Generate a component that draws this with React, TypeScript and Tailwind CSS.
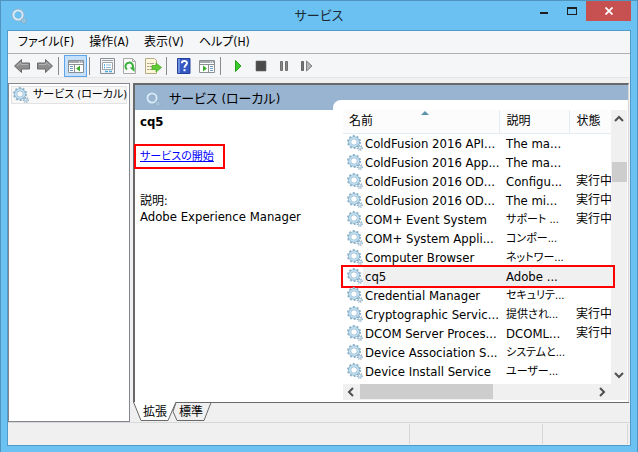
import type { ReactNode } from "react";

type Service = { name: string; desc: string; kana?: boolean; status?: string; selected?: boolean };

const services: Service[] = [
  { name: "ColdFusion 2016 API...", desc: "The ma..." },
  { name: "ColdFusion 2016 App...", desc: "The ma..." },
  { name: "ColdFusion 2016 OD...", desc: "Configu...", status: "実行中" },
  { name: "ColdFusion 2016 OD...", desc: "The mi...", status: "実行中" },
  { name: "COM+ Event System", desc: "サポート ...", kana: true, status: "実行中" },
  { name: "COM+ System Appli...", desc: "コンポー...", kana: true },
  { name: "Computer Browser", desc: "ネットワー...", kana: true },
  { name: "cq5", desc: "Adobe ...", selected: true },
  { name: "Credential Manager", desc: "セキュリテ...", kana: true },
  { name: "Cryptographic Servic...", desc: "提供され...", kana: true, status: "実行中" },
  { name: "DCOM Server Proces...", desc: "DCOML...", status: "実行中" },
  { name: "Device Association S...", desc: "システムと...", kana: true },
  { name: "Device Install Service", desc: "ユーザー...", kana: true },
];

const menus = ["ファイル(F)", "操作(A)", "表示(V)", "ヘルプ(H)"];

function Gears({ pale = false }: { pale?: boolean }) {
  return (
    <svg viewBox="0 0 16 16" className="size-4 shrink-0" fill="none" aria-hidden="true">
      {!pale && <circle cx="7" cy="7" r="6" stroke="#8fb3c9" strokeWidth="2" strokeDasharray="1.9 1.87" />}
      <circle cx="7" cy="7" r={pale ? 5 : 4.3} stroke={pale ? "#8fb4d0" : "#86aec8"} strokeWidth="3" />
      <circle cx="7" cy="7" r={pale ? 4.6 : 4.2} stroke={pale ? "#dcecf7" : "#c3e0f1"} strokeWidth="1.8" />
      <circle cx="12.8" cy="12.8" r="2.4" stroke="#8aa9bf" strokeWidth="1.4" strokeDasharray="1 .9" />
      <circle cx="12.8" cy="12.8" r="1.4" stroke="#a9c6da" strokeWidth="1.2" />
    </svg>
  );
}

function Tool({ label, active, children }: { label: string; active?: boolean; children: ReactNode }) {
  return (
    <button
      aria-label={label}
      className={
        active
          ? "flex h-[22px] w-[23px] items-center justify-center border border-[#5fa3e8] bg-[#c4e0fb]"
          : "flex h-[22px] w-[23px] items-center justify-center"
      }
    >
      <svg viewBox="0 0 18 18" className="size-[18px] shrink-0" fill="none" aria-hidden="true">
        {children}
      </svg>
    </button>
  );
}

function Divider() {
  return (
    <span className="flex h-[18px] w-2 pl-[2px]">
      <span className="w-px bg-[#8a8a8a]" />
    </span>
  );
}

function Chevron({ d }: { d: string }) {
  return (
    <svg viewBox="0 0 10 10" className="size-[10px]" fill="none" stroke="#505050" strokeWidth="2" aria-hidden="true">
      <path d={d} />
    </svg>
  );
}

function Toolbar() {
  return (
    <div className="flex h-6 items-center border-b border-[#e6e6e6] bg-[#f5f6f7] pt-px pl-[2px]">
      <Tool label="戻る">
        <path d="M1.5 9 8.5 2.5V6H16.5V12H8.5V15.5Z" fill="#8d8d8d" stroke="#6a6a6a" />
        <path d="M4 9 8 5.5V7.5H15" stroke="#b5b5b5" />
      </Tool>
      <Tool label="進む">
        <path d="M16.5 9 9.5 2.5V6H1.5V12H9.5V15.5Z" fill="#8d8d8d" stroke="#6a6a6a" />
        <path d="M14 9 10 5.5V7.5H3" stroke="#b5b5b5" />
      </Tool>
      <Divider />
      <Tool label="コンソール ツリーの表示" active>
        <path d="M1.5 3.5h15v12h-15z" fill="#fff" stroke="#8b8f94" />
        <path d="M2 4h14v2H2z" fill="#a3a8ad" />
        <path d="M12 5h1M14 5h1" stroke="#fff" />
        <path d="M2 7.5h14" stroke="#8b8f94" />
        <path d="M7.5 8v7" stroke="#8b8f94" />
        <path d="M3 9.5h3M3 11.5h3M3 13.5h3" stroke="#6f9ac0" />
        <path d="M13 8.5v6L9 11.5z" fill="#3faa2f" />
      </Tool>
      <Divider />
      <Tool label="プロパティ">
        <path d="M2.5 1.5h14v15h-14z" fill="#f4f5f6" stroke="#8b8f94" />
        <path d="M4.5 5.5h10v7h-10z" fill="#fff" stroke="#a0a4a8" />
        <path d="M4 3.5h11" stroke="#9aa0a6" />
        <path d="M6 8h1M6 10.5h1" stroke="#2c9ad1" strokeWidth="1.4" />
        <path d="M8 8h5M8 10.5h5" stroke="#8fb9d6" />
        <path d="M7 14.5h3M11 14.5h3" stroke="#4aa8dc" strokeWidth="1.4" />
      </Tool>
      <Tool label="最新の情報に更新">
        <path d="M2.5 1.5h9l3 3v12h-12z" fill="#fafafa" stroke="#a8a8a8" />
        <path d="M11.5 1.5v3h3" stroke="#a8a8a8" />
        <path d="M6 12.5A3.8 3.8 0 1 1 11 12" stroke="#39b03a" strokeWidth="2" />
        <path d="M8.5 10.5h5v4.5z" fill="#39b03a" />
      </Tool>
      <Tool label="一覧のエクスポート">
        <path d="M1.5 1.5h9l2 2v13h-11z" fill="#fdf6d8" stroke="#b5aa86" />
        <path d="M3.5 6.5h1M3.5 9.5h1M3.5 12.5h1" stroke="#555" />
        <path d="M5.5 6.5h4.5M5.5 9.5h3M5.5 12.5h3" stroke="#a8a08a" />
        <path d="M8 8.5h4V6l5.5 4.5-5.5 4.5v-2.5H8z" fill="#5fcb35" stroke="#3fa51f" strokeWidth=".7" />
      </Tool>
      <Divider />
      <Tool label="ヘルプ">
        <path d="M2.5 1.5h12.5v15H2.5z" fill="#3459c4" stroke="#24409a" />
        <path d="M3 2h2v14H3z" fill="#6f8fe0" />
        <path d="M6.8 6.300c0-3 5.200-3 5.200-.2 0 2-2.500 2-2.500 4.700" stroke="#fff" strokeWidth="1.9" />
        <path d="M8.5 12.2h2v2h-2z" fill="#fff" />
      </Tool>
      <Tool label="操作ウィンドウの表示">
        <path d="M1.5 3.5h15v12h-15z" fill="#fff" stroke="#8b8f94" />
        <path d="M2 4h14v2H2z" fill="#a3a8ad" />
        <path d="M12 5h1M14 5h1" stroke="#fff" />
        <path d="M2 7.5h14M10.5 8v7" stroke="#8b8f94" />
        <path d="M12 9.5h3M12 11.5h3M12 13.5h3" stroke="#6f9ac0" />
        <path d="M5 8.5v6l4-3z" fill="#3faa2f" />
      </Tool>
      <Divider />
      <Tool label="サービスの開始">
        <path d="M6.500 3.500v11l5.500-5.500z" fill="#3ccb2d" stroke="#27a01c" />
      </Tool>
      <Tool label="サービスの停止">
        <path d="M4 4h10v10H4z" fill="#4a4a4a" stroke="#6a6a6a" strokeWidth=".6" />
      </Tool>
      <Tool label="サービスの一時停止">
        <path d="M5.5 4.5h2v9h-2zM10.5 4.5h2v9h-2z" fill="#8a8a8a" stroke="#707070" />
      </Tool>
      <Tool label="サービスの再起動">
        <path d="M3.5 4.5h2v9h-2z" fill="#777" stroke="#666" />
        <path d="M8.5 4v10l5.500-5z" fill="#b5b5b5" stroke="#808080" />
      </Tool>
    </div>
  );
}

function ServiceTable() {
  return (
    <table className="w-full table-fixed border-collapse">
      <colgroup>
        <col />
        <col className="w-[70px]" />
        <col className="w-[42px]" />
      </colgroup>
      <thead>
        <tr className="h-[23px] bg-[#fcfcfc] text-left text-xs">
          <th className="relative border-r border-b border-[#e1ecf5] p-0 pl-[6px] font-normal">
            名前
            <svg viewBox="0 0 8 4" className="absolute top-px left-1/2 h-1 w-2" aria-hidden="true">
              <path d="M4 0 8 4H0z" fill="#5b93ad" />
            </svg>
          </th>
          <th className="border-r border-b border-[#e1ecf5] p-0 pl-[7px] font-normal">説明</th>
          <th className="border-b border-[#e1ecf5] p-0 pl-[7px] font-normal">状態</th>
        </tr>
      </thead>
      <tbody>
        {services.map((s, i) => (
          <tr key={i} className="relative h-[19px] leading-[19px] whitespace-nowrap">
            <td className="p-0 pl-1">
              <div className="flex h-[19px] items-center">
                <Gears />
                <span className={s.selected ? "grow bg-[#f0f0f0] pl-[2px]" : "pl-[2px]"}>{s.name}</span>
              </div>
              {s.selected && (
                <span className="pointer-events-none absolute -inset-y-[2px] -right-1 -left-[2px] border-2 border-[#f00]" />
              )}
            </td>
            <td className={s.selected ? "bg-[#f0f0f0] p-0" : "p-0"}>
              <div className={s.kana ? "h-[19px] pl-[7px] text-[11px]" : "h-[19px] pl-[7px]"}>{s.desc}</div>
            </td>
            <td className={s.selected ? "bg-[#f0f0f0] p-0" : "p-0"}>
              <div className="h-[19px] overflow-hidden pl-[7px] text-xs leading-[19px]">{s.status}</div>
            </td>
          </tr>
        ))}
      </tbody>
    </table>
  );
}

export default function App() {
  return (
    <div className="flex min-h-screen flex-col border border-[#4f95bd] bg-[#6bc1f2] px-[6px] pb-[6px] font-['DejaVu_Sans_Condensed','Noto_Sans_CJK_JP',sans-serif] text-[13px] text-black [font-feature-settings:'palt']">
      <header className="grid h-[29px] grid-cols-[1fr_auto_1fr] items-center">
        <div className="pl-1">
          <Gears pale />
        </div>
        <h1 className="text-[13px] text-[#1c2a33]">サービス</h1>
        <div className="flex h-full items-start justify-end">
          <button aria-label="最小化" className="flex h-5 w-[26px] items-center justify-center">
            <span className="mt-1 h-[2px] w-2 bg-[#1e1e1e]" />
          </button>
          <button aria-label="最大化" className="flex h-5 w-[29px] items-center justify-center">
            <span className="h-2 w-[10px] border border-t-2 border-[#1e1e1e]" />
          </button>
          <button aria-label="閉じる" className="flex h-5 w-[45px] items-center justify-center bg-[#c75050]">
            <svg viewBox="0 0 8 8" className="size-2" stroke="#fff" strokeWidth="1.8" aria-hidden="true">
              <path d="M.5.5l7 7M7.5.5l-7 7" />
            </svg>
          </button>
        </div>
      </header>

      <div className="flex grow flex-col border border-[#4f9cc9] bg-[#f0f0f0]">
        <nav className="flex h-[23px] items-center gap-[15px] border-b border-[#b0b0b0] bg-[#f5f6f7] pl-[10px] text-xs">
          {menus.map((m) => (
            <button key={m}>{m}</button>
          ))}
        </nav>
        <Toolbar />

        <main className="mt-[5px] flex grow">
          <aside className="w-[122px] shrink-0 border border-[#828790] bg-white p-[2px]">
            <button className="flex h-[18px] w-full items-center gap-1 border border-[#e2e2e2] bg-[#f7f7f7] pl-[1px] text-[11px] whitespace-nowrap">
              <Gears />
              サービス (ローカル)
            </button>
          </aside>

          <section className="mr-px ml-[3px] flex min-w-0 grow flex-col">
            <div className="flex grow border-t-2 border-r border-l-2 border-t-[#696969] border-r-[#d8d8d8] border-l-[#696969] bg-white">
              <div className="w-[198px] shrink-0">
                <h2 className="flex h-[25px] items-center gap-2 bg-[#99b4d1] pt-[3px] pl-[10px]">
                  <Gears pale />
                  サービス (ローカル)
                </h2>
                <div className="pl-[5px]">
                  <h3 className="mt-1 leading-4 font-bold">cq5</h3>
                  <div className="mt-[14px] -ml-[6px] flex h-[25px] w-[91px] items-center border-2 border-[#f00] pl-1">
                    <a href="#start" className="text-[11px] leading-4 text-[#00f] underline">
                      サービスの開始
                    </a>
                  </div>
                  <p className="mt-6 text-xs leading-4">説明:</p>
                  <p className="leading-4">Adobe Experience Manager</p>
                </div>
              </div>

              <div className="flex min-w-0 grow flex-col bg-[#99b4d1] pt-[15px]">
                <div className="flex grow flex-col rounded-tl-lg bg-white pt-[10px] pr-px pb-[2px] pl-[10px]">
                  <div className="flex grow">
                    <div className="min-w-0 grow pb-[3px]">
                      <ServiceTable />
                    </div>
                    <div className="flex w-4 shrink-0 flex-col items-center justify-between bg-[#f0f0f0] py-1">
                      <Chevron d="M1 7l4-4 4 4" />
                      <div className="mt-[38px] mb-auto h-5 w-[15px] bg-[#cdcdcd]" />
                      <Chevron d="M1 3l4 4 4-4" />
                    </div>
                  </div>
                  <div className="flex h-4 items-center bg-[#f0f0f0] pr-5 pl-[3px]">
                    <Chevron d="M7 1l-4 4 4 4" />
                    <div className="mr-auto ml-1 h-[15px] w-[51%] bg-[#cdcdcd]" />
                    <Chevron d="M3 1l4 4-4 4" />
                  </div>
                </div>
              </div>
            </div>

            <div className="relative flex h-5 border-t border-[#696969] text-xs leading-[18px]">
              <svg viewBox="0 0 80 20" className="absolute -top-px left-0 h-5 w-20" fill="none" aria-hidden="true">
                <path d="M40 9.5 43 .5H78L71 18.5H44z" fill="#f0f0f0" stroke="#696969" />
                <path d="M.5 0 8 18.5H35L43 0z" fill="#fff" />
                <path d="M.5 0 8 18.5H35L43 0" stroke="#696969" />
              </svg>
              <button className="relative ml-[10px]">拡張</button>
              <button className="relative ml-3">標準</button>
            </div>
          </section>
        </main>

        <footer className="flex h-[23px] border-t border-[#d7d7d7] py-[1px]">
          <div className="grow border-r border-[#d7d7d7]" />
          <div className="w-[133px] border-r border-[#d7d7d7]" />
          <div className="mr-[2px] w-[85px] border-r border-[#d7d7d7]" />
        </footer>
      </div>
    </div>
  );
}
